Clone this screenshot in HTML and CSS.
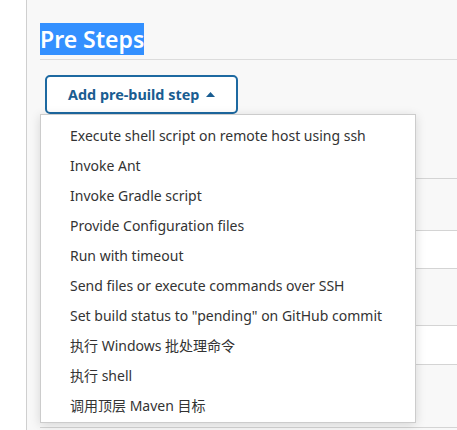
FILE: index.html
```html
<!DOCTYPE html>
<html lang="en">
<head>
    <meta charset="UTF-8">
    <meta name="viewport" content="width=device-width, initial-scale=1.0">
    <title>Pre Steps</title>
    <link rel="stylesheet" href="styles.css">
</head>
<body>
    <div class="page">
        <div class="side"></div>
        <div class="main">
            <h2 class="section-title"><span class="selected">Pre Steps</span></h2>

            <div class="actions">
                <button class="add-step">
                    Add pre-build step
                    <svg class="caret" width="9" height="5" viewBox="0 0 9 5"><path d="M0 5 L4.5 0 L9 5 Z" fill="currentColor"/></svg>
                </button>

                <div class="dropdown">
                    <div class="dropdown-item">Execute shell script on remote host using ssh</div>
                    <div class="dropdown-item">Invoke Ant</div>
                    <div class="dropdown-item">Invoke Gradle script</div>
                    <div class="dropdown-item">Provide Configuration files</div>
                    <div class="dropdown-item">Run with timeout</div>
                    <div class="dropdown-item">Send files or execute commands over SSH</div>
                    <div class="dropdown-item">Set build status to "pending" on GitHub commit</div>
                    <div class="dropdown-item">执行 Windows 批处理命令</div>
                    <div class="dropdown-item">执行 shell</div>
                    <div class="dropdown-item">调用顶层 Maven 目标</div>
                </div>
            </div>

            <div class="rows">
                <div class="row row-a"></div>
                <div class="row row-b"></div>
                <div class="row row-c"></div>
                <div class="row row-d"></div>
                <div class="row row-e"></div>
                <div class="row row-f"></div>
            </div>
        </div>
    </div>
</body>
</html>
```

FILE: styles.css
```css
body {
    font-family: "Noto Sans", "Noto Sans CJK SC", sans-serif;
    margin: 0;
    padding: 0;
    background-color: #fff;
    color: #333;
}

.page {
    display: flex;
    height: 430px;
    overflow: hidden;
}

.side {
    width: 26px;
    flex-shrink: 0;
    background-color: #fff;
    border-right: 1px solid #cfcfcf;
}

.main {
    flex: 1;
    background-color: #f8f8f8;
    padding: 23px 0 0 13px;
}

.section-title {
    margin: 0;
    font-size: 23px;
    line-height: 33px;
    font-weight: 600;
    padding-bottom: 3px;
    border-bottom: 1px solid #dcdcdc;
}

.selected {
    background-color: #3390ff;
    color: #fff;
}

.actions {
    position: relative;
    padding: 15px 0 0 5px;
    height: 39px;
}

.add-step {
    display: flex;
    align-items: center;
    gap: 7px;
    height: 39px;
    width: 193px;
    padding: 0 0 0 21px;
    border: 2px solid #1d69a1;
    border-radius: 5px;
    background-color: #fff;
    color: #1a5d91;
    font-family: inherit;
    font-size: 14.4px;
    font-weight: 700;
    cursor: pointer;
}

.caret {
    margin-top: -1px;
}

.dropdown {
    position: absolute;
    top: 54px;
    left: 0;
    width: 374px;
    padding: 6px 0 1px 0;
    background-color: #fff;
    border: 1px solid #cccccc;
    box-shadow: 0 2px 10px rgba(0, 0, 0, 0.14);
    z-index: 10;
}

.dropdown-item {
    height: 30px;
    line-height: 30px;
    padding-left: 29px;
    font-size: 14px;
    color: #333;
    white-space: nowrap;
}

.rows .row {
    border-bottom: 1px solid #d4d4d4;
}

.row-a { height: 64px; background-color: #f8f8f8; }
.row-b { height: 51px; background-color: #f8f8f8; }
.row-c { height: 37px; background-color: #fff; }
.row-d { height: 56px; background-color: #f8f8f8; }
.row-e { height: 38px; background-color: #fff; }
.row-f { height: 62px; background-color: #f8f8f8; }
```
